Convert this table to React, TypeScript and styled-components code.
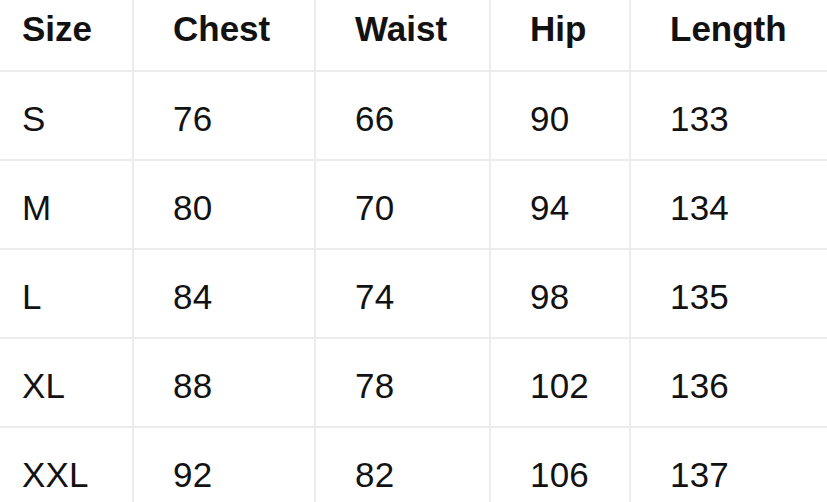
import styled, { createGlobalStyle } from 'styled-components'

const GlobalStyle = createGlobalStyle`
  html, body {
    margin: 0;
    padding: 0;
    background: #ffffff;
  }
  body {
    font-family: "Liberation Sans", Arial, sans-serif;
    color: #121212;
    overflow: hidden;
  }
`

const Table = styled.div`
  display: grid;
  grid-template-columns: 134px 182px 175px 140px 1fr;
  grid-template-rows: 72px repeat(5, 89px);
  width: 827px;
  height: 502px;
  overflow: hidden;
`

const Cell = styled.div<{ $first?: boolean; $last?: boolean; $head?: boolean }>`
  display: flex;
  align-items: center;
  box-sizing: border-box;
  padding-left: ${(p) => (p.$first ? '22px' : '39px')};
  padding-bottom: ${(p) => (p.$head ? '12px' : '0')};
  padding-top: ${(p) => (p.$head ? '0' : '6px')};
  border-right: ${(p) => (p.$last ? 'none' : '2px solid #ececec')};
  border-bottom: 2px solid #ececec;
  font-size: 35px;
  font-weight: ${(p) => (p.$head ? 700 : 400)};
  letter-spacing: ${(p) => (p.$head ? '0' : '0.2px')};
  white-space: nowrap;
`

const headers = ['Size', 'Chest', 'Waist', 'Hip', 'Length']

const rows = [
  ['S', '76', '66', '90', '133'],
  ['M', '80', '70', '94', '134'],
  ['L', '84', '74', '98', '135'],
  ['XL', '88', '78', '102', '136'],
  ['XXL', '92', '82', '106', '137'],
]

export default function App() {
  return (
    <>
      <GlobalStyle />
      <Table>
        {headers.map((h, i) => (
          <Cell key={h} $head $first={i === 0} $last={i === headers.length - 1}>
            {h}
          </Cell>
        ))}
        {rows.map((row) =>
          row.map((value, i) => (
            <Cell key={row[0] + i} $first={i === 0} $last={i === row.length - 1}>
              {value}
            </Cell>
          ))
        )}
      </Table>
    </>
  )
}
